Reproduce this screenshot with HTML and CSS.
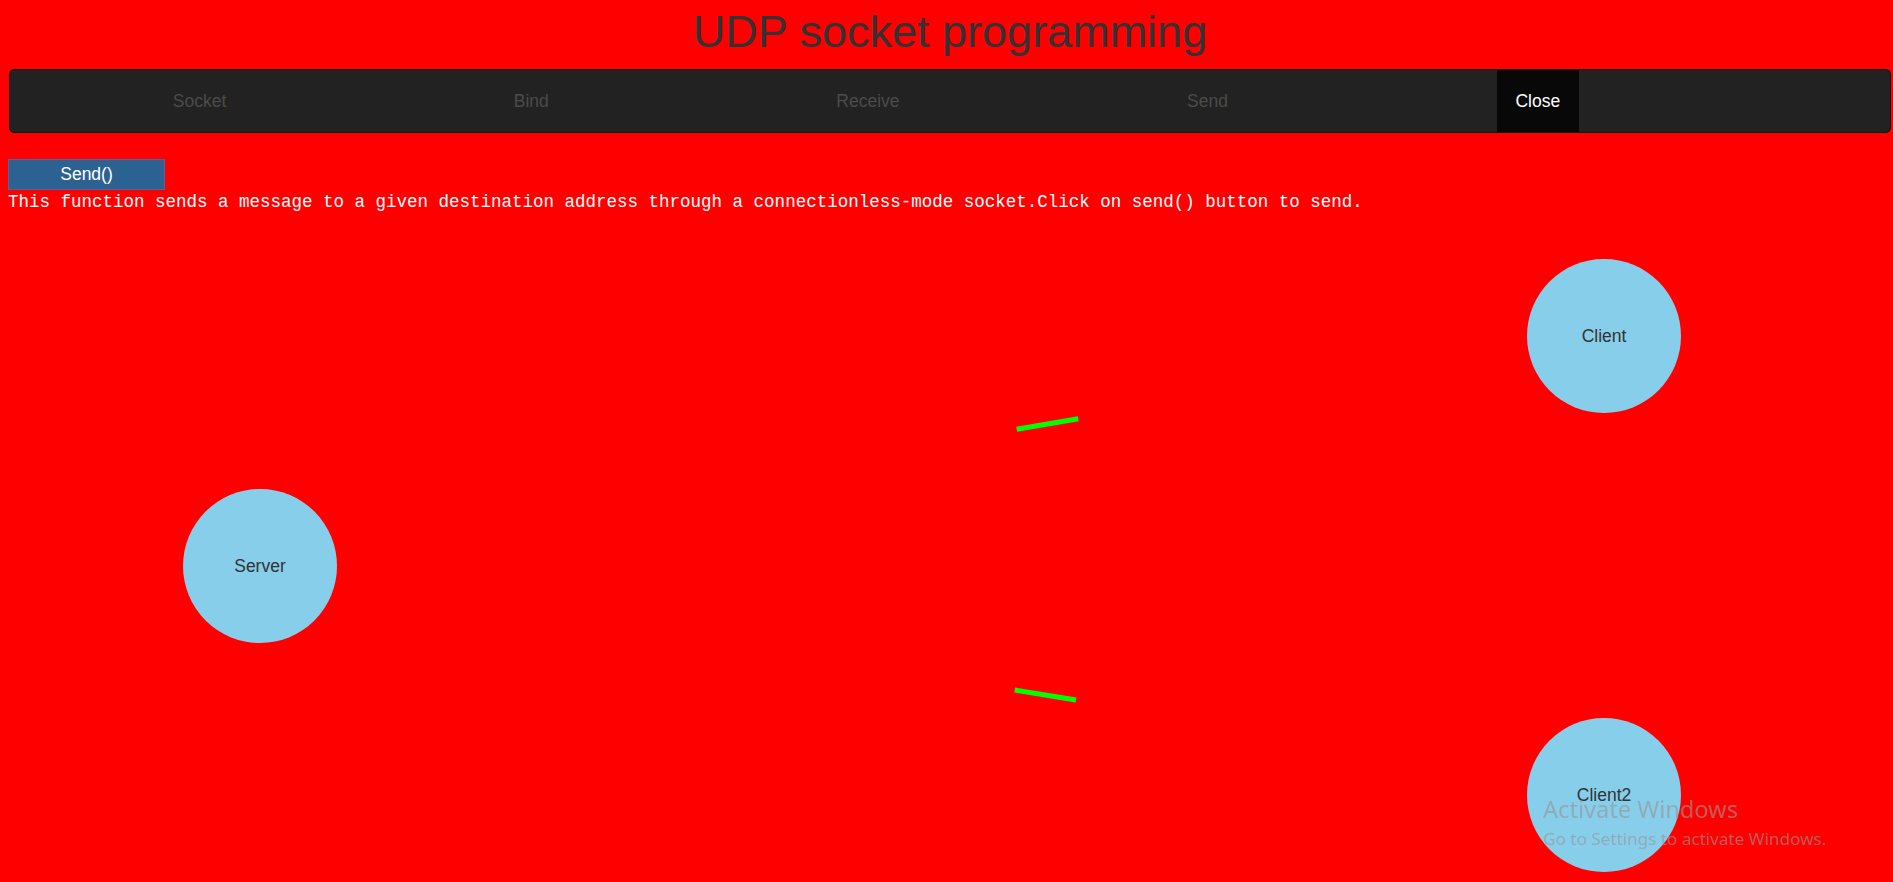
FILE: index.html
```html
<!DOCTYPE html>
<html lang="en">
<head>
<meta charset="utf-8">
<title>UDP socket programming</title>
<link rel="stylesheet" href="styles.css">
</head>
<body>
<div class="page">
  <h1 class="title">UDP socket programming</h1>
  <nav class="navbar">
    <ul class="nav">
      <li><a href="#">Socket</a></li>
      <li><a href="#">Bind</a></li>
      <li><a href="#">Receive</a></li>
      <li><a href="#">Send</a></li>
      <li class="active"><a href="#">Close</a></li>
    </ul>
  </nav>
  <button class="send-btn" type="button">Send()</button>
  <p class="desc">This function sends a message to a given destination address through a connectionless-mode socket.Click on send() button to send.</p>
  <div class="stage">
    <svg class="wires" width="1885" height="660" viewBox="0 0 1885 660">
      <line x1="1008.7" y1="216.3" x2="1070.3" y2="205.7" class="packet"/>
      <line x1="1006.7" y1="477" x2="1068" y2="487" class="packet"/>
    </svg>
    <div class="node node-server">Server</div>
    <div class="node node-client">Client</div>
    <div class="node node-client2">Client2</div>
  </div>
</div>
<div class="watermark">
  <div class="wm-title">Activate Windows</div>
  <div class="wm-sub">Go to Settings to activate Windows.</div>
</div>
</body>
</html>
```

FILE: styles.css
```css
html, body {
  margin: 0;
  padding: 0;
  background: #ff0000;
  overflow: hidden;
}

body {
  width: 1893px;
  height: 882px;
  font-family: "Liberation Sans", Arial, sans-serif;
}

.page {
  padding: 7px 0 0 8px;
  width: 1885px;
  box-sizing: border-box;
}

.title {
  margin: 0 0 12px 0;
  font-size: 45px;
  line-height: 50px;
  font-weight: normal;
  color: #333333;
  text-align: center;
  padding-left: 1px;
  width: 1882px;
}

.navbar {
  margin-left: 1px;
  width: 1882px;
  height: 64px;
  box-sizing: border-box;
  background: #222222;
  border: 1px solid #080808;
  border-radius: 5px;
}

.nav {
  list-style: none;
  margin: 0;
  padding: 0 0 0 144px;
  display: flex;
  gap: 250px;
}

.nav a {
  display: block;
  padding: 18.75px;
  font-size: 17.5px;
  line-height: 25px;
  color: #4b4b4b;
  text-decoration: none;
}

.nav .active a {
  background: #080808;
  color: #ffffff;
}

.send-btn {
  display: block;
  margin: 26px 0 0 0;
  width: 157px;
  height: 31px;
  padding: 0;
  background: #2c6291;
  border: 1px solid #5a5fa0;
  color: #ffffff;
  font-family: "Liberation Sans", Arial, sans-serif;
  font-size: 17.5px;
  line-height: 29px;
}

.desc {
  margin: 2px 0 0 0;
  font-family: "Liberation Mono", "Courier New", monospace;
  font-size: 17.5px;
  line-height: 20px;
  color: #ffffff;
}

.stage {
  position: relative;
  height: 660px;
  margin-top: 1px;
}

.wires {
  position: absolute;
  left: 0;
  top: 0;
}

.packet {
  stroke: #00ff00;
  stroke-width: 5;
}

.node {
  position: absolute;
  width: 154px;
  height: 154px;
  border-radius: 50%;
  background: #87ceeb;
  color: #333333;
  font-size: 17.5px;
  display: flex;
  align-items: center;
  justify-content: center;
}

.node-server { left: 175px; top: 276px; }
.node-client { left: 1519px; top: 46px; }
.node-client2 { left: 1519px; top: 505px; }

.watermark {
  position: fixed;
  left: 1543px;
  top: 794px;
  color: rgba(150, 150, 150, 0.62);
  font-family: "Noto Sans", "Open Sans", sans-serif;
  pointer-events: none;
}

.wm-title {
  font-size: 23.6px;
  line-height: 30px;
}

.wm-sub {
  font-size: 17.1px;
  line-height: 22px;
  margin-top: 4px;
}
```
